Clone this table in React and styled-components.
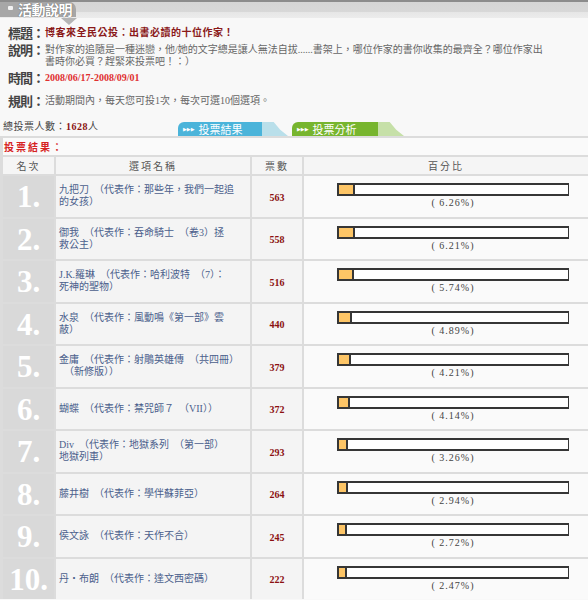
import React from "react";
import styled, { createGlobalStyle } from "styled-components";

const GlobalStyle = createGlobalStyle`
  html, body {
    margin: 0;
    padding: 0;
    overflow: hidden;
    background: #f8f8f8;
  }
  body {
    font-family: "Noto Sans CJK TC", "Liberation Serif", serif;
    color: #555;
  }
`;

const CJK = `"Liberation Serif", "Noto Sans CJK TC", serif`;

// data
const results = [
  { rank: "1.", lines: ["九把刀　（代表作：那些年，我們一起追", "的女孩）"], votes: 563, pct: 6.26 },
  { rank: "2.", lines: ["御我　（代表作：吞命騎士　（卷3）拯", "救公主）"], votes: 558, pct: 6.21 },
  { rank: "3.", lines: ["J.K.羅琳　（代表作：哈利波特　（7）：", "死神的聖物）"], votes: 516, pct: 5.74 },
  { rank: "4.", lines: ["水泉　（代表作：風動鳴《第一部》雲", "蔽）"], votes: 440, pct: 4.89 },
  { rank: "5.", lines: ["金庸　（代表作：射鵰英雄傳　（共四冊）", "　（新修版））"], votes: 379, pct: 4.21 },
  { rank: "6.", lines: ["蝴蝶　（代表作：禁咒師７　（VII））"], votes: 372, pct: 4.14 },
  { rank: "7.", lines: ["Div　（代表作：地獄系列　（第一部）", "地獄列車）"], votes: 293, pct: 3.26 },
  { rank: "8.", lines: ["藤井樹　（代表作：學伴蘇菲亞）"], votes: 264, pct: 2.94 },
  { rank: "9.", lines: ["侯文詠　（代表作：天作不合）"], votes: 245, pct: 2.72 },
  { rank: "10.", lines: ["丹・布朗　（代表作：達文西密碼）"], votes: 222, pct: 2.47 },
];

const Page = styled.div`
  width: 588px;
`;

/* ---------- header strip ---------- */
const HeaderBar = styled.div`
  position: relative;
  height: 16px;
  border-top: 2px solid #8c8c8c;
  background: linear-gradient(#d5d5d5 0, #d8d8d8 62%, #e6e6e6 62%, #ececec 100%);
  display: flex;
  align-items: flex-start;

  &::after {
    content: "";
    position: absolute;
    left: 61px;
    top: 16px;
    border-left: 8px solid transparent;
    border-right: 8px solid transparent;
    border-top: 7px solid #b4b4b4;
  }
`;

const HeaderTab = styled.div`
  height: 15px;
  width: 76px;
  background: #a7a7a7;
  border-radius: 0 7px 0 0;
  display: flex;
  align-items: center;
  gap: 5px;
  padding-left: 8px;
  box-sizing: border-box;
  color: #fff;
  font-size: 14px;
  font-weight: 700;
  line-height: 15px;
  text-shadow: 0 0 1px #6d6d6d, 0 0 1px #6d6d6d;
  letter-spacing: -0.5px;
  white-space: nowrap;
`;

const TabDot = styled.span`
  width: 5px;
  height: 4px;
  background: #f2f2f2;
  border-radius: 1px;
  margin-top: -3px;
`;

/* ---------- info block ---------- */
const Info = styled.div`
  padding: 8px 0 0 8px;
  display: flex;
  flex-direction: column;
  gap: 3px;
`;

const InfoRow = styled.div`
  display: flex;
  align-items: flex-start;
  margin-top: ${(p) => p.$gap || 0}px;
`;

const Label = styled.div`
  width: 37px;
  flex: none;
  font-size: 13px;
  font-weight: 700;
  line-height: 14px;
  color: #444;
  letter-spacing: -1px;
  white-space: nowrap;
`;

const Value = styled.div`
  padding-top: 1px;
  font-family: ${CJK};
  font-size: 10px;
  line-height: 12px;
  color: ${(p) => p.$color || "#666"};
  font-weight: ${(p) => (p.$bold ? 700 : 400)};
  letter-spacing: ${(p) => p.$spacing || 0}px;
  white-space: nowrap;
`;

/* ---------- tabs line ---------- */
const TabLine = styled.div`
  margin-top: 12px;
  height: 16px;
  display: flex;
  align-items: flex-end;
  border-bottom: 2px solid #dcdcdc;
`;

const Total = styled.div`
  width: 178px;
  padding-left: 3px;
  box-sizing: border-box;
  align-self: center;
  font-family: ${CJK};
  font-size: 10px;
  color: #444;
  letter-spacing: 0.5px;
  margin-top: -6px;

  b {
    color: #8b1414;
  }
`;

const VoteTab = styled.div`
  position: relative;
  width: ${(p) => p.$w}px;
  height: 14px;
  margin-right: ${(p) => p.$mr}px;
  background: ${(p) => p.$bg};
  border-radius: 6px 0 0 0;
  color: #fff;
  font-size: 11px;
  line-height: 14px;
  padding-left: 5px;
  box-sizing: border-box;
  display: flex;
  align-items: center;
  gap: 4px;

  &::after {
    content: "";
    position: absolute;
    right: -24px;
    bottom: 0;
    width: 26px;
    height: 14px;
    background: ${(p) => p.$curl};
    clip-path: polygon(0 0, 45% 0, 70% 55%, 100% 100%, 0 100%);
    border-radius: 0 6px 0 0;
  }
`;

const Arrows = styled.span`
  font-size: 5px;
  letter-spacing: 0;
  font-family: "DejaVu Sans", sans-serif;
`;

/* ---------- results ---------- */
const Results = styled.div`
  border-left: 3px solid #dcdcdc;
`;

const ResultsTitle = styled.div`
  height: 17px;
  padding-left: 1px;
  font-size: 10px;
  line-height: 17px;
  font-weight: 700;
  color: #d62222;
  letter-spacing: 2px;
  background: #fafafa;
`;

const Table = styled.div`
  display: grid;
  grid-template-columns: 51px 194px 50px 1fr;
  grid-template-rows: 17px;
  grid-auto-rows: 40.5px;
  gap: 2px;
  background: #dcdcdc;
  border-top: 2px solid #dcdcdc;
`;

const HeadCell = styled.div`
  background: #f5f5f5;
  display: flex;
  align-items: center;
  justify-content: center;
  font-size: 10px;
  color: #555;
  letter-spacing: 2px;
`;

const RankCell = styled.div`
  background: #d9d9d9;
  display: flex;
  align-items: center;
  justify-content: center;
  font-family: "Liberation Serif", serif;
  font-weight: 700;
  font-size: 31px;
  color: #fff;
  padding-top: 2px;
`;

const NameCell = styled.div`
  background: #f4f4f4;
  display: flex;
  flex-direction: column;
  justify-content: center;
  padding: 0 4px 0 3px;
  font-family: ${CJK};
  font-size: 10px;
  line-height: 12px;
  color: #4b5f8c;
  white-space: nowrap;
  overflow: hidden;
`;

const VotesCell = styled.div`
  background: #f4f4f4;
  display: flex;
  align-items: center;
  justify-content: center;
  padding-top: 2px;
  font-family: "Liberation Serif", serif;
  font-weight: 700;
  font-size: 10px;
  color: #8b1010;
`;

const PercentCell = styled.div`
  background: #fafafa;
  display: flex;
  align-items: center;
  padding-left: 33px;
`;

const PercentBlock = styled.div`
  width: 232px;
  display: flex;
  flex-direction: column;
  align-items: center;
  gap: 1px;
`;

const Bar = styled.div`
  width: 100%;
  height: 13px;
  box-sizing: border-box;
  border: 2px solid #363636;
  border-right-width: 1px;
  background: #fff;
  display: flex;
`;

const Fill = styled.div`
  background: #fdc566;
  border-right: 2px solid #363636;
`;

const PercentText = styled.div`
  font-family: "Liberation Serif", serif;
  font-size: 10px;
  line-height: 12px;
  color: #444;
  letter-spacing: 1px;
`;

export default function App() {
  return (
    <Page>
      <GlobalStyle />
      <HeaderBar>
        <HeaderTab>
          <TabDot />
          活動說明
        </HeaderTab>
      </HeaderBar>

      <Info>
        <InfoRow>
          <Label>標題：</Label>
          <Value $color="#8b1a1a" $bold $spacing={0.5}>
            博客來全民公投：出書必讀的十位作家！
          </Value>
        </InfoRow>
        <InfoRow>
          <Label>說明：</Label>
          <Value>
            對作家的追隨是一種迷戀，他/她的文字總是讓人無法自拔......書架上，哪位作家的書你收集的最齊全？哪位作家出
            <br />
            書時你必買？趕緊來投票吧！：）
          </Value>
        </InfoRow>
        <InfoRow>
          <Label>時間：</Label>
          <Value $color="#e03030" $bold>
            2008/06/17-2008/09/01
          </Value>
        </InfoRow>
        <InfoRow $gap={6}>
          <Label>規則：</Label>
          <Value>活動期間內，每天您可投1次，每次可選10個選項。</Value>
        </InfoRow>
      </Info>

      <TabLine>
        <Total>
          總投票人數：<b>1628</b>人
        </Total>
        <VoteTab $w={86} $mr={28} $bg="#4bb4da" $curl="#b9dfea">
          <Arrows>▶▶▶</Arrows>投票結果
        </VoteTab>
        <VoteTab $w={88} $mr={0} $bg="#77b52e" $curl="#c6e0a8">
          <Arrows>▶▶▶</Arrows>投票分析
        </VoteTab>
      </TabLine>

      <Results>
        <ResultsTitle>投票結果：</ResultsTitle>
        <Table>
          <HeadCell>名次</HeadCell>
          <HeadCell>選項名稱</HeadCell>
          <HeadCell>票數</HeadCell>
          <HeadCell>百分比</HeadCell>
          {results.map((r) => (
            <React.Fragment key={r.rank}>
              <RankCell>{r.rank}</RankCell>
              <NameCell>
                {r.lines.map((line, i) => (
                  <div key={i}>{line}</div>
                ))}
              </NameCell>
              <VotesCell>{r.votes}</VotesCell>
              <PercentCell>
                <PercentBlock>
                  <Bar>
                    <Fill style={{ width: `${r.pct}%` }} />
                  </Bar>
                  <PercentText>( {r.pct.toFixed(2)}%)</PercentText>
                </PercentBlock>
              </PercentCell>
            </React.Fragment>
          ))}
        </Table>
      </Results>
    </Page>
  );
}
